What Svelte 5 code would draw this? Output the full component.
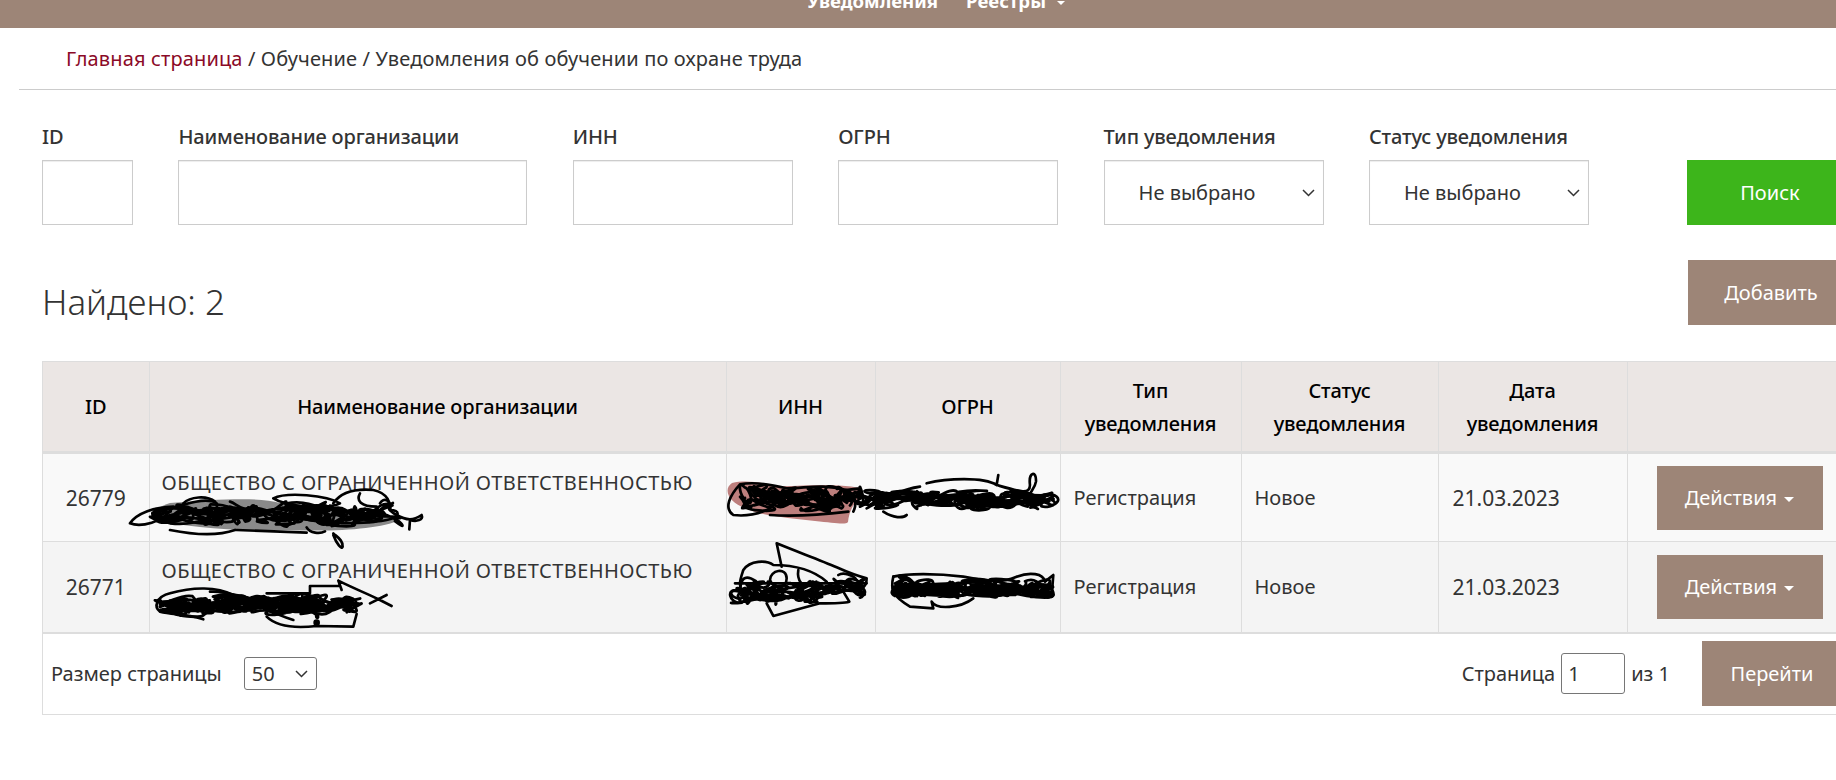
<script>
	// seeded scribble so the redaction marks come out the same every run
	function scribble(x0, x1, yc, amp, n, seed) {
		let s = seed;
		const rnd = () => {
			s = (s * 16807) % 2147483647;
			return s / 2147483647;
		};
		let x = x0;
		let y = yc;
		let d = `M${x0} ${yc}`;
		for (let i = 0; i < n; i++) {
			const nx = Math.min(x1, Math.max(x0, x0 + ((x1 - x0) * i) / n + (rnd() - 0.5) * 50));
			const ny = yc + (rnd() - 0.5) * 2 * amp;
			const c1x = x + (rnd() - 0.5) * 36;
			const c1y = y + (rnd() - 0.5) * 2 * amp;
			const c2x = nx + (rnd() - 0.5) * 36;
			const c2y = ny + (rnd() - 0.5) * 2 * amp;
			d += ` C${c1x.toFixed(1)} ${c1y.toFixed(1)} ${c2x.toFixed(1)} ${c2y.toFixed(1)} ${nx.toFixed(1)} ${ny.toFixed(1)}`;
			x = nx;
			y = ny;
		}
		return d;
	}

	const rows = [
		{ id: '26779', org: 'ОБЩЕСТВО С ОГРАНИЧЕННОЙ ОТВЕТСТВЕННОСТЬЮ', date: '21.03.2023' },
		{ id: '26771', org: 'ОБЩЕСТВО С ОГРАНИЧЕННОЙ ОТВЕТСТВЕННОСТЬЮ', date: '21.03.2023' }
	];

	const marks = [
		scribble(156, 395, 514, 10, 60, 11),
		scribble(160, 330, 515, 8, 60, 131),
		scribble(290, 395, 515, 9, 40, 151),
		scribble(745, 860, 498, 11, 50, 23),
		scribble(748, 850, 500, 9, 40, 113),
		scribble(870, 1052, 499, 8, 80, 37),
		scribble(878, 1052, 501, 7, 70, 97),
		scribble(160, 355, 604, 8, 110, 41),
		scribble(170, 350, 606, 9, 90, 71),
		scribble(740, 860, 591, 12, 50, 53),
		scribble(745, 860, 589, 9, 30, 173),
		scribble(895, 1050, 589, 8, 80, 67),
		scribble(895, 1050, 590, 7, 70, 83)
	];
</script>

<div class="page">
	<header class="topbar">
		<nav>
			<span>Уведомления</span>
			<span>Реестры <i class="caret small"></i></span>
		</nav>
	</header>

	<div class="crumbs">
		<a href="#home">Главная страница</a> / Обучение / Уведомления об обучении по охране труда
	</div>

	<form class="filters">
		<label>ID<input type="text" /></label>
		<label>Наименование организации<input type="text" /></label>
		<label>ИНН<input type="text" /></label>
		<label>ОГРН<input type="text" /></label>
		<label>Тип уведомления<select><option>Не выбрано</option></select></label>
		<label>Статус уведомления<select><option>Не выбрано</option></select></label>
		<button class="btn green" type="button">Поиск</button>
	</form>

	<div class="found">
		<h2>Найдено: 2</h2>
		<button class="btn" type="button">Добавить</button>
	</div>

	<div class="grid">
		<table>
			<colgroup>
				<col style="width:106px" />
				<col style="width:577px" />
				<col style="width:149px" />
				<col style="width:185px" />
				<col style="width:181px" />
				<col style="width:197px" />
				<col style="width:189px" />
				<col />
			</colgroup>
			<thead>
				<tr>
					<th>ID</th>
					<th>Наименование организации</th>
					<th>ИНН</th>
					<th>ОГРН</th>
					<th>Тип<br />уведомления</th>
					<th>Статус<br />уведомления</th>
					<th>Дата<br />уведомления</th>
					<th></th>
				</tr>
			</thead>
			<tbody>
				{#each rows as row}
					<tr>
						<td class="num">{row.id}</td>
						<td class="org">{row.org}</td>
						<td></td>
						<td></td>
						<td>Регистрация</td>
						<td>Новое</td>
						<td class="date">{row.date}</td>
						<td class="act">
							<button class="btn act-btn" type="button">Действия <i class="caret"></i></button>
						</td>
					</tr>
				{/each}
			</tbody>
		</table>
		<div class="pager">
			<div class="size">
				Размер страницы
				<select><option>50</option></select>
			</div>
			<div class="goto">
				Страница <input type="text" value="1" /> из 1
				<button class="btn go" type="button">Перейти</button>
			</div>
		</div>
	</div>

	<svg class="marks" width="1872" height="780" viewBox="0 0 1872 780" fill="none" stroke="#000" stroke-linecap="round" stroke-linejoin="round">
		<path class="smear" fill="#8a8a8a" stroke="none" d="M170 503 C220 499 260 497 280 503 C320 506 370 512 400 520 C380 529 337 532 287 530 C237 532 187 527 153 520 C150 513 157 507 170 503Z" />
		<path class="smear" fill="#bd7f7d" stroke="none" d="M732 483 C745 480 760 482 775 486 C800 487 830 482 860 488 C868 494 850 500 848 522 C846 525 835 523 815 521 C790 518 760 516 745 508 C730 503 722 490 732 483Z" />

		{#each marks as d}
			<path stroke-width="2.8" d={d} />
		{/each}

		<!-- row 1, organisation -->
		<g transform="translate(120 470) scale(.3333)" stroke-width="8">
			<path d="M30 160 C50 130 100 112 160 110 C130 160 60 172 30 160Z" />
			<path d="M100 130 C200 100 260 80 290 100 C300 130 240 170 150 160 C110 150 90 145 100 130" />
			<path d="M190 100 C210 80 260 75 285 95 M330 95 C350 100 370 130 400 110" />
			<path d="M460 85 C500 65 620 75 660 100 C620 120 500 110 460 85" />
			<path d="M640 100 C660 70 700 55 760 60 C805 70 812 100 810 120 C842 120 842 142 800 150 C760 160 720 150 700 130" />
			<path d="M720 70 C708 92 722 110 770 110 M780 100 C790 80 815 90 810 120" />
			<path d="M830 135 C860 152 880 152 905 135 C912 150 890 156 870 150 L868 178" />
			<path d="M640 195 C650 222 665 240 668 230 C670 210 650 200 640 190" />
			<path d="M150 180 C230 196 300 196 345 180 M350 180 L560 188 M560 172 C570 190 600 192 615 184" />
			<path d="M500 100 C560 90 580 110 640 120" />
		</g>

		<!-- row 2, organisation -->
		<g transform="translate(140 570) scale(.3333)" stroke-width="8">
			<path d="M90 70 C50 80 40 110 60 125 C100 135 140 130 190 148 M90 70 C160 50 230 50 280 75" />
			<path d="M380 70 L510 70 L510 48 L595 48 M595 32 C640 55 680 70 720 90 L755 108 M595 32 L605 60 M690 100 L740 75" />
			<path d="M380 140 C410 170 470 175 530 168 L640 170 L650 132" />
			<path d="M210 65 C300 60 360 120 460 150" />
			<circle cx="530" cy="158" r="6" fill="#000" />
		</g>

		<!-- row 1, inn and ogrn -->
		<g transform="translate(720 465) scale(.3333)" stroke-width="8">
			<path d="M60 58 C100 50 160 60 200 70 C260 70 300 55 380 75 C410 90 410 120 400 140 M60 58 C30 90 10 130 40 150 C80 155 120 145 150 130" />
			<path d="M150 150 C220 155 300 150 385 140 M420 90 C450 95 470 105 420 125 M440 130 C480 110 530 75 600 65 M490 140 C520 160 550 160 560 150" />
			<path d="M620 55 C680 40 790 35 830 60 L835 30 M830 60 C900 80 930 90 930 60 C925 20 950 15 948 50 C945 70 930 80 930 90" />
		</g>

		<!-- row 2, inn and ogrn -->
		<g transform="translate(730 540) scale(.3333)" stroke-width="8">
			<path d="M155 80 L140 10 C200 35 270 60 320 82 C360 100 390 110 410 115 C410 140 400 155 340 150" />
			<path d="M40 90 C60 60 110 60 130 75 C190 75 250 90 290 125 M40 90 C30 120 20 140 50 175 C80 180 100 175 120 180" />
			<path d="M110 190 L130 228 L270 190 C300 190 340 190 358 185 L340 155" />
			<path d="M120 120 C120 90 170 80 170 115 C170 150 130 150 120 120 M205 90 C200 120 220 150 240 130" />
			<path d="M15 130 L410 130 M325 105 C340 95 370 105 380 120" />
			<path d="M490 110 C530 100 620 100 700 110 C760 120 800 135 860 110 C900 95 940 100 945 125 L970 105 L965 170" />
			<path d="M490 110 C480 150 490 170 540 200 L610 205 L605 185 C620 210 690 205 730 175" />
			<path d="M510 110 C570 120 560 170 520 170 C490 170 500 120 530 115" stroke-width="14" />
		</g>
	</svg>
</div>

<style>
	:global(body) {
		overflow: hidden;
		background: #fff;
	}
	.page {
		position: relative;
		width: 1872px;
		height: 780px;
		overflow: hidden;
		font-family: 'Noto Sans', sans-serif;
		font-size: 20px;
		color: #333;
	}
	.topbar {
		height: 28px;
		background: #9d8577;
		overflow: hidden;
		display: flex;
		justify-content: center;
		align-items: flex-end;
		padding-bottom: 15px;
		box-sizing: border-box;
	}
	.topbar nav {
		display: flex;
		gap: 28px;
		color: #fff;
		font-size: 18.6px;
		font-weight: 700;
		line-height: 24px;
	}
	.crumbs {
		height: 62px;
		box-sizing: border-box;
		margin: 0 18px 0 19px;
		padding: 19px 0 0 47px;
		line-height: 24px;
		letter-spacing: 0.14px;
		border-bottom: 1px solid #ccc;
	}
	.crumbs a {
		color: #8b0a27;
		text-decoration: none;
	}
	.filters {
		display: grid;
		grid-template-columns: 91px 349px 220px 220px 220px 220px 166px;
		column-gap: 45.4px;
		align-items: end;
		margin: 35px 18px 0 42px;
	}
	.filters label {
		display: flex;
		flex-direction: column;
		gap: 11px;
		font-weight: 500;
		line-height: 24px;
		letter-spacing: -0.15px;
		white-space: nowrap;
	}
	.filters input,
	.filters select {
		height: 65px;
		box-sizing: border-box;
		width: 100%;
		border: 1px solid #ccc;
		border-radius: 0;
		background-color: #fff;
		box-shadow: inset 0 1px 1px rgba(0, 0, 0, 0.075);
		font: inherit;
		font-weight: 400;
		letter-spacing: 0;
		color: #333;
		padding: 0 0 0 34px;
	}
	select {
		appearance: none;
		background-image: url("data:image/svg+xml,%3Csvg xmlns='http://www.w3.org/2000/svg' width='13' height='8'%3E%3Cpath d='M1 1l5.5 5.5L12 1' fill='none' stroke='%23333' stroke-width='1.5'/%3E%3C/svg%3E");
		background-repeat: no-repeat;
		background-position: right 8px center;
	}
	.btn {
		border: none;
		background: #9d8577;
		color: #fff;
		font: inherit;
		height: 65px;
		padding: 0;
		white-space: nowrap;
	}
	.green {
		background: #3db51b;
		margin-left: 52.6px;
		width: 166px;
	}
	.found {
		display: flex;
		justify-content: space-between;
		align-items: flex-start;
		margin: 35px 18px 0 42px;
		height: 65px;
	}
	.found h2 {
		margin: 0;
		padding-top: 22px;
		font-size: 35px;
		font-weight: 300;
		line-height: 40px;
		color: #333;
	}
	.found .btn {
		width: 166px;
	}
	.grid {
		margin: 36px 18px 0 42px;
		border: 1px solid #ddd;
	}
	table {
		width: 100%;
		table-layout: fixed;
		border-collapse: collapse;
	}
	th {
		height: 89px;
		background: #ebe6e4;
		color: #000;
		font-weight: 500;
		line-height: 33px;
		letter-spacing: -0.15px;
		border: 1px solid #ddd;
		border-top: none;
		border-bottom: 3px solid #ddd;
		text-align: center;
		padding: 0;
	}
	td {
		box-sizing: border-box;
		height: 89px;
		border: 1px solid #ddd;
		padding: 0 13px;
		line-height: 28px;
		vertical-align: middle;
	}
	tbody tr:nth-child(odd) td {
		background: #f9f9f9;
	}
	tbody tr:nth-child(even) td {
		background: #f4f4f4;
	}
	tbody tr:last-child td {
		height: 91px;
		border-bottom: 2px solid #ddd;
	}
	th:first-child,
	td:first-child {
		border-left: none;
	}
	td.num {
		text-align: center;
		font-size: 21px;
	}
	td.date {
		font-size: 21px;
		padding-left: 14px;
	}
	td.org {
		vertical-align: top;
		padding: 15px 0 0 12px;
		letter-spacing: 0.45px;
		white-space: nowrap;
	}
	td.act {
		padding: 0 0 0 29px;
	}
	.act-btn {
		width: 166px;
		height: 64px;
		display: block;
	}
	.caret {
		display: inline-block;
		width: 0;
		height: 0;
		margin-left: 2px;
		vertical-align: middle;
		border-top: 5px solid;
		border-left: 5px solid transparent;
		border-right: 5px solid transparent;
	}
	.caret.small {
		margin-left: 6px;
		border-top-width: 4px;
		border-left-width: 4px;
		border-right-width: 4px;
	}
	.pager {
		height: 80px;
		box-sizing: border-box;
		display: flex;
		justify-content: space-between;
		align-items: center;
		padding: 0 11px 0 8px;
	}
	.size {
		display: flex;
		align-items: center;
		gap: 22px;
	}
	.size select {
		width: 73px;
		height: 33px;
		font: inherit;
		color: #333;
		background-color: #fff;
		border: 1px solid #767676;
		border-radius: 3px;
		padding: 0 0 0 7px;
	}
	.goto {
		display: flex;
		align-items: center;
		gap: 6px;
	}
	.goto input {
		width: 64px;
		height: 41px;
		box-sizing: border-box;
		border: 1px solid #767676;
		border-radius: 3px;
		font: inherit;
		color: #333;
		padding: 0 6px;
	}
	.go {
		width: 140px;
		margin-left: 26px;
	}
	.marks {
		position: absolute;
		top: 0;
		left: 0;
		pointer-events: none;
	}
</style>
